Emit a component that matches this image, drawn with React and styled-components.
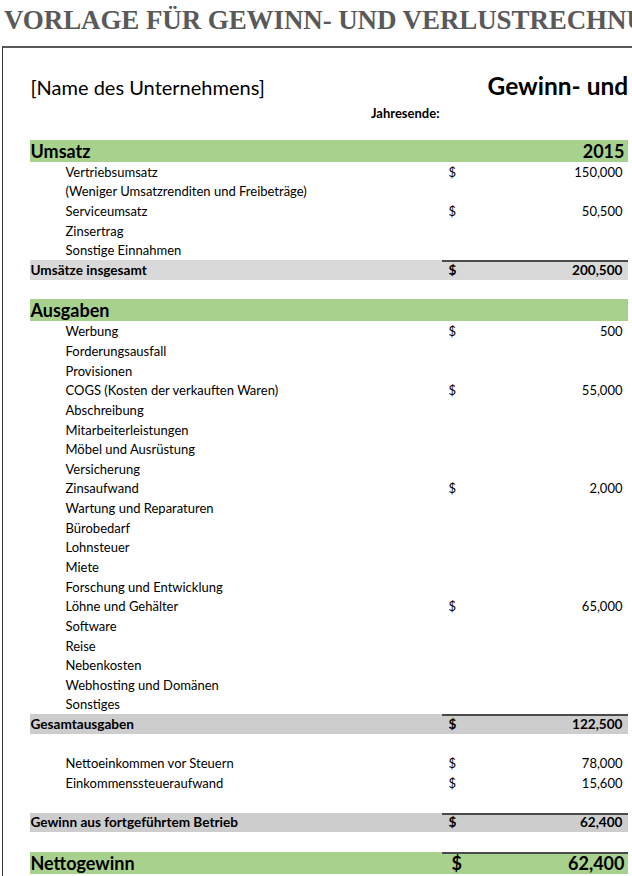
import React from "react";
import styled, { createGlobalStyle } from "styled-components";

const Global = createGlobalStyle`
  html, body { margin: 0; padding: 0; background: #fff; overflow: hidden; }
  body { font-family: Lato, "Noto Sans", sans-serif; color: #000; }
`;

const Page = styled.div`
  width: 632px;
  height: 876px;
  overflow: hidden;
`;

const Title = styled.h1`
  margin: 0;
  padding: 4px 0 0 4px;
  height: 42px;
  box-sizing: border-box;
  font-family: "Liberation Serif", serif;
  font-weight: 700;
  font-size: 27px;
  line-height: 32px;
  color: #595959;
  white-space: nowrap;
  letter-spacing: -0.1px;
`;

const Sheet = styled.div`
  margin-top: 4px;
  margin-left: 2px;
  border-top: 2px solid #5a5a5a;
  border-left: 1.5px solid #333;
  padding: 0 0 0 26.5px;
  height: 900px;
`;

const Header = styled.div`
  display: grid;
  grid-template-columns: 412px 1fr;
  padding-top: 22px;
  width: 598px;
`;

const Company = styled.div`
  font-size: 20px;
  line-height: 30px;
  padding-left: 1px;
  align-self: end;
`;

const ReportTitle = styled.div`
  font-size: 24.5px;
  font-weight: 700;
  line-height: 32px;
  padding-left: 46px;
  white-space: nowrap;
  overflow: hidden;
  align-self: end;
`;

const YearEnd = styled.div`
  font-size: 13px;
  font-weight: 700;
  text-align: right;
  padding-right: 2px;
  line-height: 16px;
  margin-top: 3px;
`;

const Table = styled.div`
  width: 598px;
  margin-top: 19px;
`;

const bgFor = { section: "#a9d18e", net: "#a9d18e", total: "#d9d9d9", total2: "#cdcdcd" };

const Row = styled.div`
  display: grid;
  grid-template-columns: 412px 60px 1fr;
  align-items: center;
  height: ${(p) => (p.$kind === "section" || p.$kind === "net" ? "22px" : "19.65px")};
  background: ${(p) => bgFor[p.$kind] || "transparent"};
  font-size: ${(p) =>
    p.$kind === "section" || p.$kind === "net" ? "18px" : p.$kind === "item" ? "13px" : "13.6px"};
  font-weight: ${(p) => (p.$kind === "item" || p.$kind === "blank" ? 400 : 700)};
`;

const Label = styled.div`
  padding-left: ${(p) => (p.$indent ? "36px" : "1px")};
  white-space: nowrap;
`;

const Cell = styled.div`
  align-self: stretch;
  display: flex;
  align-items: center;
  box-shadow: ${(p) => (p.$rule ? "inset 0 2px 0 #4a4a4a" : "none")};
`;

const Dollar = styled(Cell)`
  padding-left: ${(p) => (p.$big ? "10px" : "7px")};
`;

const Amount = styled(Cell)`
  justify-content: flex-end;
  padding-right: ${(p) => (p.$big ? "3px" : "5px")};
`;

const rows = [
  { kind: "section", label: "Umsatz", amount: "2015" },
  { kind: "item", label: "Vertriebsumsatz", dollar: true, amount: "150,000" },
  { kind: "item", label: "(Weniger Umsatzrenditen und Freibeträge)" },
  { kind: "item", label: "Serviceumsatz", dollar: true, amount: "50,500" },
  { kind: "item", label: "Zinsertrag" },
  { kind: "item", label: "Sonstige Einnahmen" },
  { kind: "total", label: "Umsätze insgesamt", dollar: true, amount: "200,500" },
  { kind: "blank" },
  { kind: "section", label: "Ausgaben" },
  { kind: "item", label: "Werbung", dollar: true, amount: "500" },
  { kind: "item", label: "Forderungsausfall" },
  { kind: "item", label: "Provisionen" },
  { kind: "item", label: "COGS (Kosten der verkauften Waren)", dollar: true, amount: "55,000" },
  { kind: "item", label: "Abschreibung" },
  { kind: "item", label: "Mitarbeiterleistungen" },
  { kind: "item", label: "Möbel und Ausrüstung" },
  { kind: "item", label: "Versicherung" },
  { kind: "item", label: "Zinsaufwand", dollar: true, amount: "2,000" },
  { kind: "item", label: "Wartung und Reparaturen" },
  { kind: "item", label: "Bürobedarf" },
  { kind: "item", label: "Lohnsteuer" },
  { kind: "item", label: "Miete" },
  { kind: "item", label: "Forschung und Entwicklung" },
  { kind: "item", label: "Löhne und Gehälter", dollar: true, amount: "65,000" },
  { kind: "item", label: "Software" },
  { kind: "item", label: "Reise" },
  { kind: "item", label: "Nebenkosten" },
  { kind: "item", label: "Webhosting und Domänen" },
  { kind: "item", label: "Sonstiges" },
  { kind: "total2", label: "Gesamtausgaben", dollar: true, amount: "122,500" },
  { kind: "blank" },
  { kind: "item", label: "Nettoeinkommen vor Steuern", dollar: true, amount: "78,000" },
  { kind: "item", label: "Einkommenssteueraufwand", dollar: true, amount: "15,600" },
  { kind: "blank" },
  { kind: "total2", label: "Gewinn aus fortgeführtem Betrieb", dollar: true, amount: "62,400" },
  { kind: "blank" },
  { kind: "net", label: "Nettogewinn", dollar: true, amount: "62,400" },
];

export default function App() {
  return (
    <Page>
      <Global />
      <Title>VORLAGE FÜR GEWINN- UND VERLUSTRECHNUNG</Title>
      <Sheet>
        <Header>
          <Company>[Name des Unternehmens]</Company>
          <ReportTitle>Gewinn- und Verlustrechnung</ReportTitle>
          <YearEnd>Jahresende:</YearEnd>
        </Header>
        <Table>
          {rows.map((r, i) => {
            const rule = r.kind === "total" || r.kind === "total2" || r.kind === "net";
            const big = r.kind === "net";
            return (
              <Row key={i} $kind={r.kind}>
                <Label $indent={r.kind === "item"}>{r.label}</Label>
                <Dollar $rule={rule} $big={big}>{r.dollar ? "$" : ""}</Dollar>
                <Amount $rule={rule} $big={big || r.kind === "section"}>{r.amount || ""}</Amount>
              </Row>
            );
          })}
        </Table>
      </Sheet>
    </Page>
  );
}
